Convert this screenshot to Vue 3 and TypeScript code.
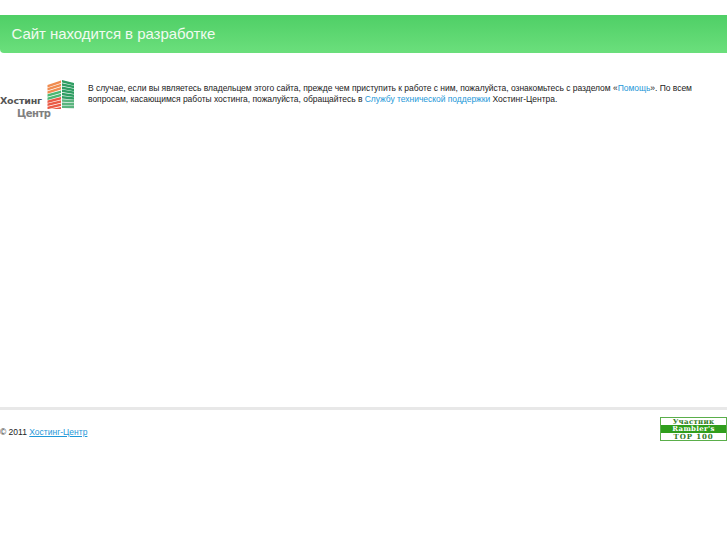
<script setup lang="ts">
interface Floor { points: string; c: string }
const floors: Floor[] = []
const leftColors = ['#f08c50', '#f08c50', '#f08c50', '#4cb772', '#4cb772', '#ea5a46', '#ea5a46', '#ea5a46', '#ea5a46']
leftColors.forEach((c, i) => {
  const yl = 6 + i * 3.1
  const yr = 1.5 + i * 3.3
  floors.push({ points: `47.5,${yl} 61,${yr} 61,${yr + 2.5} 47.5,${yl + 2.5}`, c })
})
for (let i = 0; i < 9; i++) {
  const yl = 1 + i * 3.2
  const yr = 4 + i * 2.85
  floors.push({ points: `62,${yl} 74,${yr} 74,${yr + 2.5} 62,${yl + 2.5}`, c: i < 6 ? '#2f9d62' : '#5cb57f' })
}
</script>

<template>
  <div class="page">
    <header class="banner"><h1>Сайт находится в разработке</h1></header>
    <section class="intro">
      <div class="logo">
        <svg class="mark" width="75" height="30" viewBox="0 0 75 30" aria-hidden="true">
          <polygon v-for="(f, i) in floors" :key="i" :points="f.points" :fill="f.c" />
        </svg>
        <span class="hosting">Хостинг</span>
        <span class="center">Центр</span>
      </div>
      <p>В случае, если вы являетесь владельцем этого сайта, прежде чем приступить к работе с ним, пожалуйста, ознакомьтесь с разделом «<a href="#">Помощь</a>». По всем вопросам, касающимся работы хостинга, пожалуйста, обращайтесь в <a href="#">Службу технической поддержки</a> Хостинг-Центра.</p>
    </section>
    <footer class="foot">
      <span class="copy">© 2011 <a class="under" href="#">Хостинг-Центр</a></span>
      <div class="badge">
        <span>Участник</span>
        <span class="mid">Rambler's</span>
        <span class="top">TOP 100</span>
      </div>
    </footer>
  </div>
</template>

<style scoped>
.page {
  width: 727px;
  height: 545px;
  padding-top: 15px;
  box-sizing: border-box;
  overflow: hidden;
  background: #fff;
  font-family: "Liberation Sans", Arial, sans-serif;
  color: #222;
}
.banner {
  height: 38px;
  display: flex;
  align-items: center;
  padding: 0 0 1px 11.5px;
  box-sizing: border-box;
  background: linear-gradient(#4fcf66, #6bdf7c);
  border-bottom-left-radius: 4px;
}
h1 {
  margin: 0;
  font-size: 15px;
  font-weight: 400;
  color: #f1fbf0;
  letter-spacing: -0.05px;
}
.intro {
  display: flex;
  margin-top: 26px;
  height: 328px;
}
.logo {
  position: relative;
  flex: 0 0 88px;
  height: 41px;
}
.mark {
  display: block;
}
.hosting {
  position: absolute;
  left: 0;
  top: 16px;
  font: 700 9.5px "DejaVu Sans", sans-serif;
  letter-spacing: -0.2px;
  color: #555;
}
.center {
  position: absolute;
  left: 17px;
  top: 28.5px;
  font: 700 10px "DejaVu Sans", sans-serif;
  letter-spacing: -0.5px;
  color: #808080;
}
p {
  margin: 4px 0 0;
  width: 608px;
  font-size: 8.5px;
  line-height: 11px;
  letter-spacing: -0.03px;
}
a {
  color: #1e98d8;
  text-decoration: none;
}
.foot {
  display: flex;
  justify-content: space-between;
  align-items: flex-start;
  border-top: 3px solid #e8e8e8;
  padding-top: 7px;
  font-size: 8.5px;
}
.copy {
  margin-top: 10px;
  letter-spacing: 0;
}
.under {
  text-decoration: underline;
}
.badge {
  width: 67px;
  height: 24px;
  box-sizing: border-box;
  border: 1px solid #5aae4a;
  display: flex;
  flex-direction: column;
  font: 700 7px/7.3px "DejaVu Serif", serif;
  color: #2f7a1c;
  text-align: center;
  letter-spacing: 0.3px;
}
.badge span {
  flex: 1;
}
.mid {
  background: #2f9e1c;
  color: #fff;
}
.badge .top {
  letter-spacing: 0.9px;
}
</style>
